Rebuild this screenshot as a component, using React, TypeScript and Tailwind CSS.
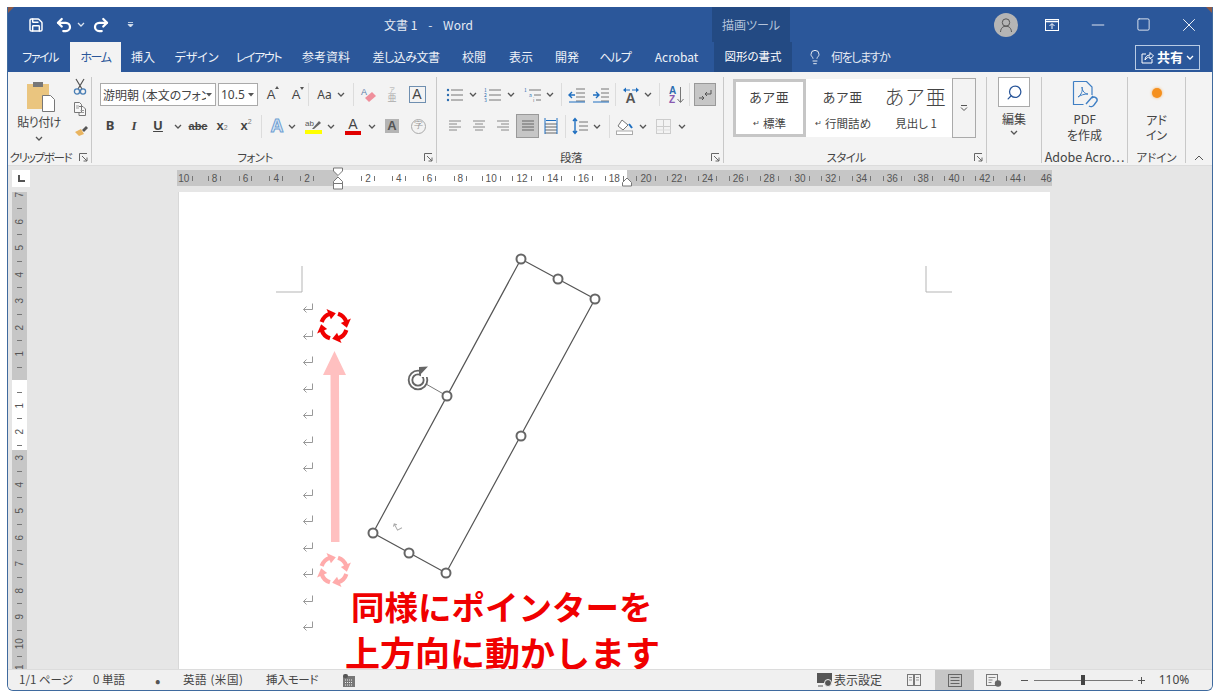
import React from "react";
import { Save, Undo2, Redo2, Lightbulb, Search, Minus, Square, X } from "lucide-react";

const Chev = ({ c = "#555" }: { c?: string }) => (
  <svg width="8" height="5" viewBox="0 0 8 5"><path d="M1 1l3 3 3-3" fill="none" stroke={c} strokeWidth="1.3" /></svg>
);
const Launcher = () => (
  <svg width="9" height="9" viewBox="0 0 9 9" fill="none" stroke="#666" strokeWidth="1"><path d="M.5 8V.5H8M3 3l5 5M8 4.5V8H4.5" /></svg>
);
const S = ({ c, children }: { c: string; children?: React.ReactNode }) => (
  <div className={`flex items-center justify-center shrink-0 ${c}`}>{children}</div>
);
const Sep = ({ c = "" }: { c?: string }) => <div className={`w-px h-[23px] bg-[#dcdcdc] shrink-0 ${c}`} />;
const Ic = ({ w = 20, h = 20, children }: { w?: number; h?: number; children: React.ReactNode }) => (
  <svg width={w} height={h} viewBox={`0 0 ${w} ${h}`} fill="none">{children}</svg>
);
const Lines = ({ y, x1 = 4, x2 = 18, c = "#777" }: { y: number[]; x1?: number; x2?: number; c?: string }) => (
  <>{y.map((v, i) => <path key={i} d={`M${x1} ${v}H${x2}`} stroke={c} strokeWidth="1" />)}</>
);

const tabs: [string, string][] = [
  ["ファイル", "w-[60px] tracking-[-1.5px]"], ["ホーム", "w-[51px] tracking-[-1.5px]"], ["挿入", "w-[44px]"], ["デザイン", "w-[63px]"], ["レイアウト", "w-[61px] tracking-[-1.4px]"],
  ["参考資料", "w-[74px]"], ["差し込み文書", "w-[86px] tracking-[-0.5px]"], ["校閲", "w-[50px]"], ["表示", "w-[44px]"], ["開発", "w-[48px]"], ["ヘルプ", "w-[48px] tracking-[-1px]"], ["Acrobat", "w-[75px]"],
];

const Group = ({ c, label, labelC = "", launcher, children }: { c: string; label: string; labelC?: string; launcher?: boolean; children: React.ReactNode }) => (
  <div className={`relative shrink-0 h-[86px] flex flex-col border-r border-[#c8c8c8] ${c}`}>
    <div className="h-[72px]">{children}</div>
    <div className={`h-[14px] pt-[3px] flex items-center justify-center text-[11.5px] leading-none text-[#444] whitespace-nowrap ${launcher ? "pr-[18px] tracking-[-0.6px]" : ""} ${labelC}`}>{label}</div>
    {launcher && <div className="absolute right-[3px] bottom-[1px] flex"><Launcher /></div>}
  </div>
);

const Cell = ({ n, last }: { n: number; last?: boolean }) => (
  <div className="w-[30.8px] shrink-0 flex items-center justify-center gap-[3px]">
    {!last && <div className="w-px h-[5px] bg-[#777]" />}
    <span>{n}</span>
    {!last && <div className="w-px h-[5px] bg-[#777]" />}
  </div>
);
const VCell = ({ n }: { n: number }) => (
  <div className="h-[26.5px] shrink-0 flex flex-col items-center">
    <div className="h-[13.25px] flex items-center -rotate-90">{n}</div>
    <div className="h-[13.25px] flex items-center"><div className="w-[5px] h-px bg-[#777]" /></div>
  </div>
);

const Ret = () => (
  <svg width="12" height="12" viewBox="0 0 12 12" fill="none" stroke="#999" strokeWidth="1"><path d="M10.5 1.5V7.5H1.5M4.5 4.5L1.5 7.5L4.5 10.5" /></svg>
);

const CircleArrows = ({ cx, cy, color }: { cx: number; cy: number; color: string }) => {
  const r = 13;
  const pt = (a: number, rr: number) => {
    const t = (a * Math.PI) / 180;
    return [cx + rr * Math.sin(t), cy - rr * Math.cos(t)];
  };
  return (
    <g>
      {[8, 98, 188, 278].map((tip) => {
        const [x0, y0] = pt(tip - 80, r);
        const [x1, y1] = pt(tip - 26, r);
        const a = pt(tip, r);
        const b = pt(tip - 32, r + 5.5);
        const d = pt(tip - 32, r - 5.5);
        return (
          <g key={tip}>
            <path d={`M${x0} ${y0}A${r} ${r} 0 0 1 ${x1} ${y1}`} fill="none" stroke={color} strokeWidth="4.2" />
            <polygon points={`${a[0]},${a[1]} ${b[0]},${b[1]} ${d[0]},${d[1]}`} fill={color} />
          </g>
        );
      })}
    </g>
  );
};

const handles = [[521, 259], [558, 279], [595, 299], [447, 396], [521, 436], [373, 533], [409, 553], [446, 573]];

export default function App() {
  return (
    <div className="w-[1222px] h-[699px] bg-white overflow-hidden pl-[7px] pt-[7px] [font-family:'Noto_Sans_CJK_JP','Noto_Sans',sans-serif] text-[#444]">
      <div className="relative w-[1206px] h-[684px] border-x border-b border-[#3f6a9e] rounded-b-[6px] overflow-hidden flex flex-col bg-[#e6e6e6]">
        <div className="absolute left-0 top-0 w-[6px] h-[6px] bg-[#8d5a48] [clip-path:polygon(0_0,100%_0,0_100%)]" />
        <div className="absolute right-0 top-0 w-[6px] h-[6px] bg-[#8d5a48] [clip-path:polygon(0_0,100%_0,100%_100%)]" />
        {/* title bar */}
        <div className="h-[35px] bg-[#2b579a] flex items-stretch text-white shrink-0 [font-feature-settings:'palt']">
          <div className="w-[18px]" />
          <S c="w-[20px]"><Save size={16} strokeWidth={2.2} color="#fff" /></S>
          <div className="w-[6px]" />
          <S c="w-[24px]"><Undo2 size={18} strokeWidth={3} color="#fff" /></S>
          <S c="w-[10px]"><Chev c="#dbe4f0" /></S>
          <div className="w-[3px]" />
          <S c="w-[24px]"><Redo2 size={18} strokeWidth={3} color="#fff" /></S>
          <div className="w-[12px]" />
          <S c="w-[10px]">
            <svg width="7" height="7" viewBox="0 0 7 7"><path d="M1 1.5H6M1 3.500L3.500 6L6 3.500Z" stroke="#dbe4f0" fill="#dbe4f0" strokeWidth=".8" /></svg>
          </S>
          <div className="w-[577px] pl-[10px] flex items-center justify-center text-[12px] text-[#e4eaf3] whitespace-pre">文書 1    -    Word</div>
          <div className="w-[78px] bg-[#234a83] flex items-center justify-center text-[12px] text-[#b4c3da]">描画ツール</div>
          <div className="w-[200px]" />
          <S c="w-[32px]">
            <div className="w-[24px] h-[24px] rounded-full bg-[#b5b5b5] flex items-center justify-center">
              <svg width="16" height="16" viewBox="0 0 16 16" fill="none" stroke="#555" strokeWidth="1"><circle cx="8" cy="5.5" r="3.7" /><path d="M2.500 15c.3-4 2.500-5.800 5.500-5.800s5.200 1.800 5.500 5.800" /></svg>
            </div>
          </S>
          <div className="w-[7px]" />
          <S c="w-[45.75px]">
            <svg width="14" height="12" viewBox="0 0 14 12" fill="none" stroke="#fff" strokeWidth="1"><rect x=".5" y=".5" width="13" height="11" /><path d="M.5 2.500H13.500" strokeWidth="1.500" /><path d="M7 10V5M4.500 7L7 4.500L9.500 7" /></svg>
          </S>
          <S c="w-[45.75px]"><Minus size={20} color="#fff" strokeWidth={1} /></S>
          <S c="w-[45.75px]"><Square size={15} color="#fff" strokeWidth={1.300} /></S>
          <S c="w-[45.75px]"><X size={22} color="#fff" strokeWidth={1} /></S>
        </div>
        {/* tabs */}
        <div className="h-[30px] bg-[#2b579a] flex items-stretch shrink-0 text-[12px] text-[#eef2f8] [font-feature-settings:'palt']">
          <div className="w-[2px]" />
          {tabs.map(([t, w], i) => (
            <div key={t} className={`${w} flex items-center justify-center whitespace-nowrap ${i === 1 ? "bg-[#f3f3f3] text-[#2b579a]" : ""}`}>{t}</div>
          ))}
          <div className="w-[78px] bg-[#234a83] flex items-center justify-center text-white text-[11.5px]">図形の書式</div>
          <div className="w-[42px] pl-[4px] flex items-center justify-center"><Lightbulb size={16} strokeWidth={1.300} color="#fff" /></div>
          <div className="flex items-center text-[#e4eaf3] -ml-[3px] tracking-[-1.4px]">何をしますか</div>
          <div className="flex-1" />
          <div className="self-center w-[65px] h-[25px] border border-[#b8cbe4] flex items-center justify-center gap-[3px] mr-[12px] text-white">
            <svg width="13" height="13" viewBox="0 0 13 13" fill="none" stroke="#fff" strokeWidth="1"><path d="M5 3H1v9h10V8M4 9c0-3 2-5 5-5V1.500L12.500 5 9 8V6C7 6 5.500 7 4 9Z" /></svg>
            <span className="font-bold text-[13px]">共有</span>
            <Chev c="#fff" />
          </div>
        </div>
        {/* ribbon */}
        <div className="h-[93px] bg-[#f3f3f3] pt-[5px] flex shrink-0 text-[#444] [font-feature-settings:'palt']">
          {/* clipboard */}
          <Group c="w-[84px]" label="クリップボード" labelC="!tracking-[-1.3px]" launcher>
            <div className="flex">
              <div className="w-[62px] flex flex-col items-center pt-[3px]">
                <div className="flex ml-[4px]">
                  <Ic w={32} h={33}>
                    <rect x="2" y="4" width="22" height="25" fill="#eac57f" />
                    <rect x="8" y="2" width="10" height="5" fill="#777" />
                    <path d="M17.500 15.500h8l4 4v12h-12z" fill="#fff" stroke="#777" strokeWidth="1" />
                  </Ic>
                </div>
                <div className="text-[12px] leading-[15px] mt-[1px] whitespace-nowrap tracking-[-0.6px]">貼り付け</div>
                <div className="mt-[7px] flex"><Chev /></div>
              </div>
              <div className="w-[20px] flex flex-col items-center pt-[1px]">
                <Ic w={14} h={17}>
                  <path d="M3 1l6 10M11 1L5 11" stroke="#555" strokeWidth="1.200" />
                  <circle cx="4" cy="13.500" r="2.600" stroke="#4a7fb5" strokeWidth="1.300" />
                  <circle cx="10" cy="13.500" r="2.600" stroke="#4a7fb5" strokeWidth="1.300" />
                </Ic>
                <div className="mt-[6px] flex">
                  <Ic w={16} h={16}>
                    <path d="M2.500 1.500h5l2 2v8h-7z M7 5.500h4l2.500 2.500v6.500h-6.500v-3" stroke="#777" fill="#f8f8f8" />
                    <path d="M4 5h3M4 7h3M8.500 9.500h3.500M8.500 11.500h3.500" stroke="#999" />
                  </Ic>
                </div>
                <div className="mt-[6px] flex ml-[3px]">
                  <Ic w={16} h={14}>
                    <path d="M1 9l6-3 3 5-5 2z" fill="#e9b45f" />
                    <path d="M8 7l4-4 2 2-4 4z" fill="#555" />
                  </Ic>
                </div>
              </div>
            </div>
          </Group>
          {/* font */}
          <Group c="w-[345px]" label="フォント" launcher>
            <div className="pt-[6px] pl-[8px] flex h-[29px]">
              <div className="w-[116px] h-[23px] bg-white border border-[#aaa] flex items-center pl-[2px] text-[12px] overflow-hidden whitespace-nowrap">
                <span className="w-[103px] overflow-hidden">游明朝 (本文のフォント)</span>
                <svg width="6" height="4" viewBox="0 0 6 4" className="shrink-0"><path d="M0 0h6L3 3.500z" fill="#555" /></svg>
              </div>
              <div className="ml-[2px] w-[40px] h-[23px] bg-white border border-[#aaa] flex items-center pl-[2px] text-[12px] overflow-hidden whitespace-nowrap [font-family:'Noto_Sans',sans-serif]">
                <span className="w-[27px] overflow-hidden">10.5</span>
                <svg width="6" height="4" viewBox="0 0 6 4" className="shrink-0"><path d="M0 0h6L3 3.500z" fill="#555" /></svg>
              </div>
              <S c="w-[26px] h-[23px] text-[13px] [font-family:'Liberation_Sans',sans-serif] relative">A<span className="absolute right-[5px] top-[3px] w-0 h-0 border-x-[2px] border-b-[3px] border-x-transparent border-b-[#555]" /></S>
              <S c="w-[24px] h-[23px] text-[13px] [font-family:'Liberation_Sans',sans-serif] relative">A<span className="absolute right-[4px] top-[4px] w-0 h-0 border-x-[2px] border-t-[3px] border-x-transparent border-t-[#555]" /></S>
              <Sep />
              <S c="w-[44px] h-[23px] gap-[5px] text-[12px] [font-family:'Noto_Sans',sans-serif]">Aa <Chev /></S>
              <Sep />
              <S c="w-[30px] h-[23px]">
                <Ic w={18} h={18}>
                  <text x="1" y="9" fontSize="9" fill="#5b7ea8" fontFamily="Liberation Sans">A</text>
                  <path d="M5 12l7-6 4 4-7 6z" fill="#ef8f9b" />
                </Ic>
              </S>
              <S c="w-[16px] h-[23px] relative text-[#aaa]">
                <div className="flex flex-col items-center leading-none"><span className="text-[6px]">ア</span><span className="text-[9px]">亜</span></div>
              </S>
              <S c="w-[34px] h-[23px]">
                <div className="w-[17px] h-[17px] border border-[#6f8fb0] flex items-center justify-center text-[14px] text-[#444] [font-family:'Liberation_Sans',sans-serif]">A</div>
              </S>
            </div>
            <div className="mt-[8px] pl-[6px] flex h-[24px] items-center [font-family:'Liberation_Sans',sans-serif]">
              <S c="w-[24px] font-bold text-[13px] [font-family:'Noto_Sans',sans-serif]">B</S>
              <S c="w-[24px] italic font-bold text-[13px] [font-family:'Liberation_Serif',serif]">I</S>
              <S c="w-[24px] font-bold underline text-[13px] [font-family:'Noto_Sans',sans-serif]">U</S>
              <S c="w-[16px]"><Chev /></S>
              <S c="w-[24px] text-[11px] line-through font-bold">abc</S>
              <S c="w-[24px] font-bold text-[13px]">x<sub className="text-[7px] font-normal text-[#777] bottom-[-2px]">2</sub></S>
              <S c="w-[24px] font-bold text-[13px]">x<sup className="text-[7px] font-normal text-[#777] top-[-4px]">2</sup></S>
              <Sep c="ml-[3px]" />
              <S c="w-[22px] ml-[4px] text-[18px] font-bold text-[#dbe8f7] [-webkit-text-stroke:1px_#6f9fd2]">A</S>
              <S c="w-[8px]"><Chev /></S>
              <S c="w-[26px] ml-[4px]">
                <div className="flex flex-col items-center w-[17px]">
                  <Ic w={17} h={12}>
                    <text x="0" y="8" fontSize="8" fill="#555" fontFamily="Liberation Sans">ab</text>
                    <path d="M7 11l7-8 2 2-7 6z" fill="#666" />
                  </Ic>
                  <div className="w-[17px] h-[4px] bg-[#ffff00]" />
                </div>
              </S>
              <S c="w-[10px]"><Chev /></S>
              <S c="w-[26px] ml-[4px]">
                <div className="flex flex-col items-center leading-none text-[14px]">
                  <span className="leading-[13px]">A</span>
                  <div className="w-[16px] h-[4px] bg-[#e00000]" />
                </div>
              </S>
              <S c="w-[10px] ml-[1px]"><Chev /></S>
              <S c="w-[24px] ml-[3px]"><div className="w-[14px] h-[14px] bg-[#b4b4b4] flex items-center justify-center text-[13px] font-bold text-[#555]">A</div></S>
              <S c="w-[24px] ml-[2px]"><div className="w-[15px] h-[15px] rounded-full border border-[#aaa] flex items-center justify-center text-[9px] text-[#999]">字</div></S>
            </div>
          </Group>
          {/* paragraph */}
          <Group c="w-[287px]" label="段落" launcher>
            <div className="pt-[6px] pl-[6px] flex h-[29px] items-center">
              <S c="w-[24px]"><Ic><circle cx="3" cy="5" r="1.200" fill="#2b6cb0" /><circle cx="3" cy="10" r="1.200" fill="#2b6cb0" /><circle cx="3" cy="15" r="1.200" fill="#2b6cb0" /><Lines y={[5, 10, 15]} x1={6} /></Ic></S>
              <S c="w-[10px] ml-[1px]"><Chev /></S>
              <S c="w-[24px] ml-[3px]"><Ic><text x="1" y="7" fontSize="5" fill="#2b6cb0">1</text><text x="1" y="12" fontSize="5" fill="#2b6cb0">2</text><text x="1" y="17" fontSize="5" fill="#2b6cb0">3</text><Lines y={[5, 10, 15]} x1={6} /></Ic></S>
              <S c="w-[10px] ml-[1px]"><Chev /></S>
              <S c="w-[24px] ml-[5px]"><Ic><text x="1" y="7" fontSize="5" fill="#2b6cb0">1</text><text x="6" y="12" fontSize="5" fill="#2b6cb0">a</text><text x="10" y="17" fontSize="5" fill="#777">i</text><path d="M6 5H18M11 10H18M13 15H18" stroke="#777" /></Ic></S>
              <S c="w-[10px]"><Chev /></S>
              <Sep c="ml-[6px]" />
              <S c="w-[24px] ml-[3px]"><Ic><Lines y={[4, 8, 12, 16]} x1={9} /><path d="M2 10H8M5 7L2 10L5 13" stroke="#1f6fc0" strokeWidth="1.400" /><path d="M2 17H18" stroke="#1f6fc0" /></Ic></S>
              <S c="w-[24px]"><Ic><Lines y={[4, 8, 12, 16]} x1={10} /><path d="M2 10H8M5 7L8 10L5 13" stroke="#1f6fc0" strokeWidth="1.400" /><path d="M2 17H18" stroke="#1f6fc0" /></Ic></S>
              <Sep c="ml-[2px]" />
              <S c="w-[24px] ml-[3px]"><Ic><text x="4.500" y="18" fontSize="14" fontWeight="700" fill="#555" fontFamily="Liberation Sans">A</text><path d="M2 5L5 2.500V7.500ZM18 5L15 2.500V7.500Z" fill="#1f6fc0" /><path d="M4 5H9M11 5H16" stroke="#1f6fc0" /></Ic></S>
              <S c="w-[10px]"><Chev /></S>
              <Sep c="ml-[6px]" />
              <S c="w-[24px] ml-[4px]"><Ic><text x="3" y="9" fontSize="10" fontWeight="700" fill="#2b6cb0" fontFamily="Liberation Sans">A</text><text x="3" y="18" fontSize="10" fontWeight="700" fill="#8a5ab0" fontFamily="Liberation Sans">Z</text><path d="M14.500 2V17M11.500 14L14.500 17.500L17.500 14" stroke="#777" /></Ic></S>
              <Sep c="ml-[1px]" />
              <S c="w-[22px] h-[23px] ml-[4px] bg-[#c6c6c6] border border-[#999]"><svg width="14" height="12" viewBox="0 0 14 12" fill="none" stroke="#555"><path d="M13 1V5H7M9 3L7 5L9 7" /><path d="M1 9H6M4 7L6 9L4 11" /></svg></S>
            </div>
            <div className="mt-[8px] pl-[6px] flex h-[24px] items-center">
              <S c="w-[24px]"><Ic w={16} h={14}><Lines y={[2, 8]} x1={2} x2={14} c="#888" /><Lines y={[5, 11]} x1={2} x2={10} c="#888" /></Ic></S>
              <S c="w-[24px]"><Ic w={16} h={14}><Lines y={[2, 8]} x1={2} x2={14} c="#888" /><Lines y={[5, 11]} x1={4} x2={12} c="#888" /></Ic></S>
              <S c="w-[24px]"><Ic w={16} h={14}><Lines y={[2, 8]} x1={2} x2={14} c="#888" /><Lines y={[5, 11]} x1={6} x2={14} c="#888" /></Ic></S>
              <S c="w-[23px] h-[24px] ml-[1px] bg-[#c6c6c6] border border-[#999]"><Ic w={16} h={14}><Lines y={[2, 5, 8, 11]} x1={2} x2={14} c="#666" /></Ic></S>
              <S c="w-[24px]"><Ic w={16} h={18}><Lines y={[7, 10, 13, 16]} x1={2} x2={14} c="#666" /><path d="M2 1V17M14 1V17M3 3.500H13" stroke="#1f6fc0" /></Ic></S>
              <Sep c="ml-[2px]" />
              <S c="w-[24px] ml-[2px]"><Ic w={16} h={18}><Lines y={[5, 9, 13]} x1={7} x2={16} /><path d="M3 2V16M1 4L3 1.500L5 4M1 14L3 16.500L5 14" stroke="#1f6fc0" strokeWidth="1.400" /></Ic></S>
              <S c="w-[10px]"><Chev /></S>
              <Sep c="ml-[7px]" />
              <S c="w-[24px] ml-[3px]"><Ic w={18} h={18}><path d="M6 3L12 8L7 13L2 9Z" stroke="#777" fill="#fff" /><path d="M13 7l3 4" stroke="#1f6fc0" strokeWidth="2" /><rect x=".5" y="14" width="16" height="3.500" stroke="#aaa" fill="#fff" /></Ic></S>
              <S c="w-[10px] ml-[1px]"><Chev /></S>
              <S c="w-[24px] ml-[3px]"><Ic w={15} h={15}><rect x=".5" y=".5" width="14" height="14" stroke="#ccc" /><path d="M7.500 .5V14.500M.5 7.500H14.500" stroke="#ccc" /><path d="M.5 11H14.500" stroke="#ddd" /></Ic></S>
              <S c="w-[10px] ml-[2px]"><Chev /></S>
            </div>
          </Group>
          {/* styles */}
          <Group c="w-[263px]" label="スタイル" launcher>
            <div className="pl-[9px] pt-[1px] flex h-[61px]">
              <div className="w-[219px] h-[58px] mt-[1px] bg-white flex">
                <div className="w-[73px] border-[3px] border-[#c6c6c6] flex flex-col items-center justify-center">
                  <span className="text-[13px] leading-[22px] tracking-[1px]">あア亜</span>
                  <span className="text-[11.5px] leading-[16px] mt-[7px] flex items-center gap-[3px]"><span className="text-[8px]">↵</span>標準</span>
                </div>
                <div className="w-[74px] flex flex-col items-center justify-center">
                  <span className="text-[13px] leading-[22px] tracking-[1px]">あア亜</span>
                  <span className="text-[11.5px] leading-[16px] mt-[7px] flex items-center gap-[3px]"><span className="text-[8px]">↵</span>行間詰め</span>
                </div>
                <div className="w-[72px] flex flex-col items-center justify-center">
                  <span className="text-[20px] leading-[22px] font-light whitespace-nowrap tracking-[1.5px]">あア亜</span>
                  <span className="text-[11.5px] leading-[16px] mt-[7px]">見出し 1</span>
                </div>
              </div>
              <div className="w-[24px] h-[60px] border border-[#aaa] flex items-center justify-center">
                <svg width="8" height="8" viewBox="0 0 8 8"><path d="M1 1.500H7M1 3.500L4 6.500L7 3.500" stroke="#555" fill="none" /></svg>
              </div>
            </div>
          </Group>
          {/* editing */}
          <Group c="w-[55px]" label="">
            <div className="flex flex-col items-center">
              <div className="w-[32px] h-[30px] bg-white border border-[#aaa] flex items-center justify-center"><Search size={17} color="#2b579a" strokeWidth={1.800} className="-scale-x-100" /></div>
              <div className="text-[12px] leading-[15px] mt-[4px]">編集</div>
              <div className="flex mt-[4px]"><Chev /></div>
            </div>
          </Group>
          {/* adobe */}
          <Group c="w-[86px]" label="Adobe Acro…" labelC="!text-[12.5px]">
            <div className="flex flex-col items-center pt-[4px]">
              <Ic w={28} h={28}>
                <path d="M2.500 .5h13l5.500 5.500v8M2.500 .5v23h10" stroke="#3f7fc4" strokeWidth="1.200" />
                <path d="M7 16c3-2 5-6 4-10 0 4 3 7 6 7-4 0-7 1-10 3z" stroke="#3f7fc4" strokeWidth="1" />
                <path d="M15 23l7-8M18 25a3.500 3.500 0 0 0 5-1l3-4a3 3 0 0 0-5-3" stroke="#3f7fc4" strokeWidth="1.400" />
              </Ic>
              <div className="text-[12px] leading-[15px] mt-[3px] [font-family:'Noto_Sans',sans-serif]">PDF</div>
              <div className="text-[12px] leading-[15px]">を作成</div>
            </div>
          </Group>
          {/* addin */}
          <Group c="w-[58px]" label="アドイン">
            <div className="flex flex-col items-center">
              <div className="w-[10px] h-[10px] rounded-full bg-[#f5901e] mt-[11px] shadow-[0_0_3px_#f5b060]" />
              <div className="text-[12px] leading-[15px] mt-[14px]">アド</div>
              <div className="text-[12px] leading-[15px]">イン</div>
            </div>
          </Group>
          <div className="flex-1 flex items-end justify-center pb-[4px]">
            <svg width="10" height="6" viewBox="0 0 10 6"><path d="M1 5l4-4 4 4" stroke="#555" fill="none" /></svg>
          </div>
        </div>
        {/* horizontal ruler row */}
        <div className="h-[27px] bg-[#e6e6e6] border-t border-[#dcdcdc] pt-[4px] flex shrink-0 text-[10px] text-[#555] [font-family:'Liberation_Sans',sans-serif]">
          <div className="ml-[4px] w-[18px] h-[17px] bg-white flex items-center justify-center">
            <div className="w-[7px] h-[7px] border-l-[2px] border-b-[2px] border-[#555]" />
          </div>
          <div className="ml-[147px] relative w-[875px] h-[16px] flex">
            <div className="w-[161px] bg-[#c6c6c6] flex justify-end pr-[15.6px] overflow-hidden">
              {[10, 8, 6, 4, 2].map((n) => <Cell key={n} n={n} />)}
            </div>
            <div className="w-[289px] bg-white flex pl-[14.6px] overflow-hidden">
              {[2, 4, 6, 8, 10, 12, 14, 16, 18].map((n) => <Cell key={n} n={n} />)}
            </div>
            <div className="w-[425px] bg-[#c6c6c6] flex pl-[3.6px] overflow-hidden">
              {[20, 22, 24, 26, 28, 30, 32, 34, 36, 38, 40, 42, 44].map((n) => <Cell key={n} n={n} />)}
              <Cell n={46} last />
            </div>
            <svg className="absolute left-[155px] -top-[3px]" width="12" height="23" viewBox="0 0 12 23" fill="#fff" stroke="#777"><path d="M1.500 1h9v3l-4.500 4.500L1.500 4zM6 10l4.500 4.500v2h-9v-2zM1.500 16.500h9v5.500h-9z" /></svg>
            <svg className="absolute left-[444px] top-[7px]" width="12" height="10" viewBox="0 0 12 10" fill="#fff" stroke="#777"><path d="M6 1l4.500 4.500v3.500h-9v-3.500z" /></svg>
          </div>
        </div>
        {/* body */}
        <div className="flex-1 min-h-0 flex bg-[#e6e6e6]">
          <div className="ml-[4px] w-[15px] flex flex-col items-center text-[10px] leading-none text-[#555] [font-family:'Liberation_Sans',sans-serif] shrink-0 overflow-hidden">
            <div className="w-[15px] h-[188px] bg-[#c6c6c6] overflow-hidden flex flex-col items-center">
              <div className="-mt-[3.6px] flex flex-col items-center shrink-0">
                {[7, 6, 5, 4, 3, 2, 1].map((n) => <VCell key={n} n={n} />)}
              </div>
            </div>
            <div className="w-[15px] h-[70px] bg-white overflow-hidden flex flex-col items-center pt-[5.6px]">
              <div className="h-[13.25px] flex items-center shrink-0"><div className="w-[5px] h-px bg-[#777]" /></div>
              <VCell n={1} />
              <VCell n={2} />
            </div>
            <div className="w-[15px] flex-1 bg-[#c6c6c6] overflow-hidden flex flex-col items-center pt-[1.4px]">
              {[3, 4, 5, 6, 7, 8, 9, 10, 11].map((n) => <VCell key={n} n={n} />)}
            </div>
          </div>
          <div className="ml-[151px] w-[872px] relative bg-white overflow-hidden pt-[102.75px] pl-[123px] border-l border-[#d8d8d8] shrink-0">
            {Array.from({ length: 13 }).map((_, i) => (
              <div key={i} className="h-[26.5px] flex items-center"><Ret /></div>
            ))}
            <svg className="absolute left-0 top-0" width="872" height="477" viewBox="179 192 872 477" fill="none">
              <path d="M302 266V292H276M926 266V292H952" stroke="#b5b5b5" />
              <polygon points="373,533 521,259 595,299 446,573" stroke="#555" strokeWidth="1.200" />
              <path d="M447 396L426 384" stroke="#777" />
              <circle cx="418" cy="380" r="7.500" stroke="#666" strokeWidth="5.500" />
              <circle cx="418" cy="380" r="7.500" stroke="#fff" strokeWidth="1.800" />
              <rect x="421" y="366" width="10" height="11" fill="#fff" />
              <path d="M419 376V367L428 366.500Z" fill="#666" />
              {handles.map(([x, y]) => (
                <circle key={`${x}-${y}`} cx={x} cy={y} r="4.500" fill="#fff" stroke="#666" strokeWidth="2" />
              ))}
              <g transform="translate(397 527) rotate(62)" stroke="#aaa" strokeWidth="1"><path d="M3 -4V1H-4M-2 -1L-4 1L-2 3" /></g>
              <CircleArrows cx={334} cy={326} color="#f00000" />
              <CircleArrows cx={334} cy={570} color="#ffabab" />
              <polygon points="334.500,351 346,375 339,375 339.500,542 331,542 330.500,375 323,375" fill="#ffc0c0" />
            </svg>
            <div className="absolute left-[172px] top-[394px] text-[33.5px] leading-[40px] font-bold text-[#f00000] whitespace-nowrap">同様にポインターを</div>
            <div className="absolute left-[166px] top-[439px] text-[35px] leading-[42px] font-bold text-[#f00000] whitespace-nowrap">上方向に動かします</div>
          </div>
        </div>
        {/* status bar */}
        <div className="h-[21px] bg-[#f0f0f0] border-t border-[#dcdcdc] flex items-stretch shrink-0 text-[11.5px] text-[#444] whitespace-nowrap [font-feature-settings:'palt']">
          <div className="w-[11px]" />
          <div className="w-[74px] flex items-center">1/1 ページ</div>
          <div className="w-[62px] flex items-center">0 単語</div>
          <div className="w-[28px] flex items-center text-[16px] leading-none text-[#555]">•</div>
          <div className="w-[83px] flex items-center tracking-[0.6px]">英語 (米国)</div>
          <div className="w-[76px] flex items-center tracking-[-0.5px]">挿入モード</div>
          <S c="w-[14px]">
            <Ic w={12} h={13}><rect x="0" y="2" width="12" height="11" fill="#777" /><rect x="0" y="0" width="5" height="4" rx="2" fill="#555" /><path d="M2 6h8M2 8.500h8M2 11h8" stroke="#eee" strokeDasharray="1 1" /></Ic>
          </S>
          <div className="flex-1" />
          <S c="w-[17px]">
            <Ic w={17} h={14}><rect x="0" y="0" width="15" height="10" fill="#555" /><circle cx="11" cy="10" r="3.500" fill="#555" stroke="#f0f0f0" /><path d="M1 13h5" stroke="#555" /></Ic>
          </S>
          <div className="w-[50px] flex items-center text-[12px]">表示設定</div>
          <S c="w-[24px] ml-[18px]"><Ic w={14} h={12}><rect x=".5" y=".5" width="6" height="11" stroke="#777" /><rect x="7.500" y=".5" width="6" height="11" stroke="#777" /><path d="M2 3.500h3M2 6h3M9 3.500h3M9 6h3" stroke="#999" /></Ic></S>
          <S c="w-[39px] ml-[9px] bg-[#c6c6c6]"><Ic w={14} h={13}><rect x=".5" y=".5" width="13" height="12" stroke="#666" /><path d="M2.500 3.500h9M2.500 6.500h9M2.500 9.500h9" stroke="#666" /></Ic></S>
          <S c="w-[40px]"><Ic w={16} h={13}><rect x=".5" y=".5" width="11" height="11" stroke="#777" /><path d="M2.500 3.500h7M2.500 6h4M2.500 8.500h3" stroke="#888" /><circle cx="12" cy="9.500" r="3.200" fill="#666" /></Ic></S>
          <S c="w-[20px] text-[#555]"><div className="w-[7px] h-px bg-[#555]" /></S>
          <div className="w-[99px] relative flex items-center">
            <div className="w-full h-px bg-[#777]" />
            <div className="absolute left-[47px] top-[5px] w-[4px] h-[10px] bg-[#444]" />
          </div>
          <S c="w-[16px] relative"><div className="w-[7px] h-px bg-[#555]" /><div className="absolute w-px h-[7px] bg-[#555]" /></S>
          <div className="w-[50px] flex items-center justify-center text-[12px] [font-family:'Noto_Sans',sans-serif]">110%</div>
          <div className="w-[13px]" />
        </div>
      </div>
    </div>
  );
}
